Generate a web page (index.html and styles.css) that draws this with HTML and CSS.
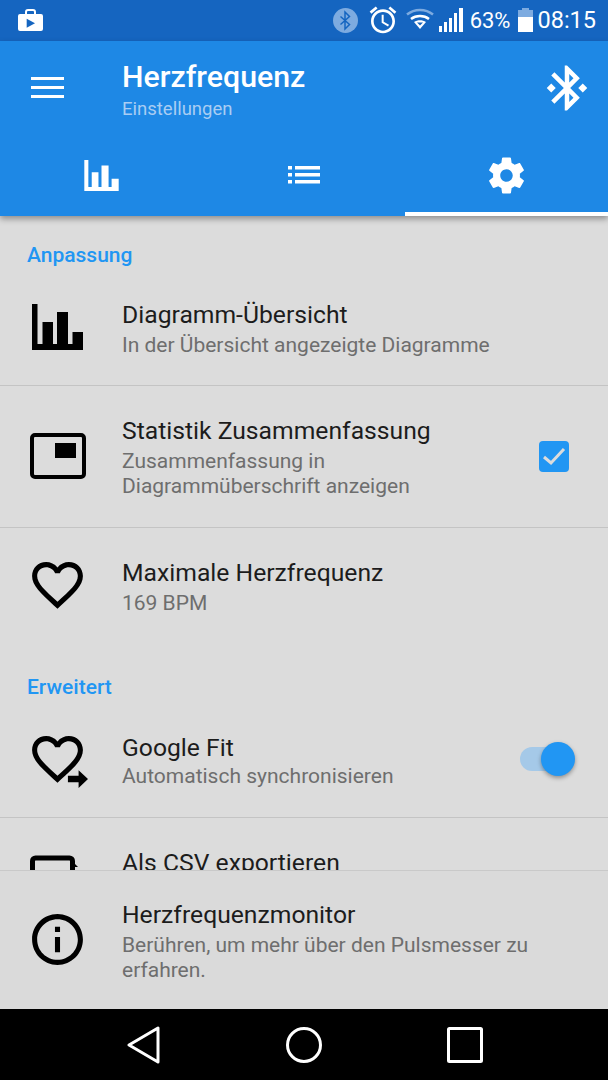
FILE: index.html
```html
<!DOCTYPE html>
<html>
<head>
  <title>Herzfrequenz</title>
  <link rel="stylesheet" href="styles.css">
</head>
<body>
  <div class="screen">
    <div class="status-bar">
      <svg class="store-icon" width="25" height="24" viewBox="0 0 25 24">
        <path fill="#fff" d="M2 6h5V4a3 3 0 0 1 3-3h5a3 3 0 0 1 3 3v2h5a2 2 0 0 1 2 2v13a2 2 0 0 1-2 2H2a2 2 0 0 1-2-2V8a2 2 0 0 1 2-2zm7 0h7V4a1 1 0 0 0-1-1h-5a1 1 0 0 0-1 1z"/>
        <path fill="#1565c0" d="M8.700 10.700l8.300 4.500-8.300 4.500z"/>
      </svg>
      <div class="status-right">
        <svg class="bt-status" width="25" height="25" viewBox="0 0 25 25">
          <circle cx="12.5" cy="12.5" r="12.5" fill="#7dabe0"/>
          <path fill="none" stroke="#1565c0" stroke-width="1.5" d="M7.500 8.500l9 8-4.500 4.500V4l4.500 4.500-9 8"/>
        </svg>
        <svg class="alarm" width="32" height="32" viewBox="0 0 24 24">
          <path fill="#fff" d="M22 5.720l-4.600-3.860-1.290 1.530 4.600 3.860L22 5.720zM7.880 3.390L6.600 1.860 2 5.710l1.290 1.530 4.590-3.850zM12.500 8H11v6l4.750 2.850.75-1.230-4-2.370V8zM12 4c-4.970 0-9 4.030-9 9s4.030 9 9 9 9-4.030 9-9-4.030-9-9-9zm0 16c-3.870 0-7-3.130-7-7s3.130-7 7-7 7 3.130 7 7-3.130 7-7 7z"/>
        </svg>
        <svg class="wifi" width="28" height="22" viewBox="0 0 28 22">
          <path fill="none" stroke="#7dabe0" stroke-width="2.5" d="M1 6.500c7.500-6 18.500-6 26 0"/>
          <path fill="none" stroke="#fff" stroke-width="2.5" d="M5 11c5-4 13-4 18 0"/>
          <path fill="#fff" d="M8 14c3.500-2.500 8.500-2.500 12 0l-6 7z"/>
          <path fill="#1565c0" d="M11 14.500h6l-3 3z"/>
        </svg>
        <svg class="signal" width="24" height="24" viewBox="0 0 24 24">
          <path fill="#fff" d="M0 18h3v6H0zM5 14h3v10H5zM10 10h3v14h-3zM15 5h3v19h-3zM20 0h4v24h-4z"/>
        </svg>
        <span class="battery-text">63%</span>
        <div class="battery">
          <div class="battery-cap"></div>
          <div class="battery-body"><div class="battery-fill"></div></div>
        </div>
        <span class="clock">08:15</span>
      </div>
    </div>

    <div class="app-bar">
      <div class="toolbar">
        <div class="menu-btn"><span></span><span></span><span></span></div>
        <div class="toolbar-title">
          <div class="title">Herzfrequenz</div>
          <div class="subtitle">Einstellungen</div>
        </div>
        <svg class="bt-connect" width="54" height="54" viewBox="0 0 24 24">
          <path fill="#fff" d="M7 12l-2-2-2 2 2 2 2-2zm10.710-4.290L12 2h-1v7.590L6.410 5 5 6.410 10.590 12 5 17.590 6.410 19 11 14.410V22h1l5.710-5.710-4.300-4.290 4.300-4.290zM13 5.830l1.880 1.880L13 9.590V5.830zm1.880 10.460L13 18.170v-3.760l1.880 1.880zM19 10l-2 2 2 2 2-2-2-2z"/>
        </svg>
      </div>
      <div class="tabs">
        <div class="tab">
          <svg width="35" height="31" viewBox="0 0 51 46">
            <path fill="#fff" d="M0 0h6v40h5V18h10v22h4.500V8h10.500v32h4.500V28H51v18H0z"/>
          </svg>
        </div>
        <div class="tab">
          <svg width="32" height="18" viewBox="0 0 32 18">
            <path fill="#fff" d="M0 0h4v3.500H0zM0 7h4v3.500H0zM0 14h4v3.500H0zM7 0h25v3.500H7zM7 7h25v3.500H7zM7 14h25v3.500H7z"/>
          </svg>
        </div>
        <div class="tab tab-active">
          <svg width="43" height="43" viewBox="0 0 24 24">
            <path fill="#fff" d="M19.430 12.980c.04-.32.07-.64.07-.98s-.03-.66-.07-.98l2.110-1.650c.19-.15.24-.42.12-.64l-2-3.460c-.12-.22-.39-.3-.61-.22l-2.490 1c-.52-.4-1.080-.73-1.690-.98l-.38-2.650C14.460 2.180 14.250 2 14 2h-4c-.25 0-.46.18-.49.42l-.38 2.650c-.61.25-1.170.59-1.690.98l-2.490-1c-.23-.09-.49 0-.61.22l-2 3.460c-.13.22-.07.49.12.64l2.110 1.650c-.04.32-.07.65-.07.98s.03.66.07.98l-2.110 1.650c-.19.15-.24.42-.12.64l2 3.460c.12.22.39.3.61.22l2.490-1c.52.4 1.080.73 1.690.98l.38 2.650c.03.24.24.42.49.42h4c.25 0 .46-.18.49-.42l.38-2.650c.61-.25 1.170-.59 1.690-.98l2.490 1c.23.09.49 0 .61-.22l2-3.460c.12-.22.07-.49-.12-.64l-2.110-1.650zM12 15.500c-1.930 0-3.500-1.570-3.500-3.500s1.570-3.500 3.500-3.500 3.500 1.570 3.500 3.500-1.570 3.500-3.500 3.500z"/>
          </svg>
        </div>
      </div>
    </div>

    <div class="settings-list">
      <div class="section-label first">Anpassung</div>

      <div class="row">
        <div class="row-icon">
          <svg class="raise" width="51" height="46" viewBox="0 0 51 46">
            <path fill="#000" d="M0 0h5.500v40h5V18H21v22h4V8h11v32h4.500V28H51v18H0z"/>
          </svg>
        </div>
        <div class="row-text">
          <div class="row-title">Diagramm-Übersicht</div>
          <div class="row-sub">In der Übersicht angezeigte Diagramme</div>
        </div>
      </div>

      <div class="row row-wide">
        <div class="row-icon">
          <svg class="raise" width="56" height="46" viewBox="0 0 56 46">
            <rect x="2" y="2" width="52" height="42" rx="3" fill="none" stroke="#000" stroke-width="4"/>
            <path fill="#000" d="M25 10h21v15H25z"/>
          </svg>
        </div>
        <div class="row-text">
          <div class="row-title">Statistik Zusammenfassung</div>
          <div class="row-sub">Zusammenfassung in<br>Diagrammüberschrift anzeigen</div>
        </div>
        <div class="checkbox">
          <svg width="30" height="31" viewBox="0 0 30 31">
            <path fill="none" stroke="#dcdcdc" stroke-width="3" d="M5 16l7 6L25 8"/>
          </svg>
        </div>
      </div>

      <div class="row no-border">
        <div class="row-icon">
          <svg width="61" height="61" viewBox="0 1 24 24">
            <path fill="#000" d="M16.500 3c-1.740 0-3.410.81-4.500 2.090C10.910 3.810 9.240 3 7.500 3 4.420 3 2 5.420 2 8.500c0 3.780 3.400 6.860 8.550 11.540L12 21.350l1.450-1.320C18.600 15.360 22 12.280 22 8.500 22 5.420 19.580 3 16.500 3zm-4.400 15.550l-.1.1-.1-.1C7.140 14.240 4 11.390 4 8.500 4 6.500 5.500 5 7.500 5c1.540 0 3.040.99 3.570 2.360h1.870C13.460 5.990 14.960 5 16.500 5c2 0 3.500 1.500 3.500 3.500 0 2.890-3.140 5.740-7.900 10.050z"/>
          </svg>
        </div>
        <div class="row-text">
          <div class="row-title">Maximale Herzfrequenz</div>
          <div class="row-sub">169 BPM</div>
        </div>
      </div>

      <div class="section-label">Erweitert</div>

      <div class="row row-fit">
        <div class="row-icon">
          <svg width="61" height="61" viewBox="0 1 24 24">
            <path fill="#000" d="M16.500 3c-1.740 0-3.410.81-4.500 2.090C10.910 3.810 9.240 3 7.500 3 4.420 3 2 5.420 2 8.500c0 3.780 3.400 6.860 8.550 11.540L12 21.350l1.450-1.320C18.600 15.360 22 12.280 22 8.500 22 5.420 19.580 3 16.500 3zm-4.400 15.550l-.1.1-.1-.1C7.140 14.240 4 11.390 4 8.500 4 6.500 5.500 5 7.500 5c1.540 0 3.040.99 3.570 2.360h1.870C13.460 5.990 14.960 5 16.500 5c2 0 3.500 1.500 3.500 3.500 0 2.890-3.140 5.740-7.900 10.050z"/>
            <path fill="#000" stroke="#dcdcdc" stroke-width="1" paint-order="stroke" d="M16.100 18.600h4.200v-2.200l3.700 3.500-3.700 3.500v-2.200h-4.200z"/>
          </svg>
        </div>
        <div class="row-text">
          <div class="row-title">Google Fit</div>
          <div class="row-sub">Automatisch synchronisieren</div>
        </div>
        <div class="switch">
          <div class="switch-track"></div>
          <div class="switch-knob"></div>
        </div>
      </div>

      <div class="row">
        <div class="row-icon">
          <svg width="56" height="46" viewBox="0 0 56 46">
            <path fill="none" stroke="#000" stroke-width="5" d="M2.500 44V7a3 3 0 0 1 3-3h34a3 3 0 0 1 3 3v9M2.500 44h40"/>
            <path fill="#000" d="M45 10l3 3h-3z"/>
          </svg>
        </div>
        <div class="row-text">
          <div class="row-title">Als CSV exportieren</div>
          <div class="row-sub">&nbsp;</div>
        </div>
      </div>
    </div>

    <div class="info-footer">
      <div class="row no-border">
        <div class="row-icon">
          <svg class="raise" width="61" height="61" viewBox="0 0 24 24">
            <path fill="#000" d="M11 17h2v-6h-2v6zm1-15C6.480 2 2 6.480 2 12s4.480 10 10 10 10-4.480 10-10S17.520 2 12 2zm0 18c-4.410 0-8-3.590-8-8s3.590-8 8-8 8 3.590 8 8-3.590 8-8 8zm-1-11h2V7h-2v2z"/>
          </svg>
        </div>
        <div class="row-text">
          <div class="row-title">Herzfrequenzmonitor</div>
          <div class="row-sub">Berühren, um mehr über den Pulsmesser zu<br>erfahren.</div>
        </div>
      </div>
    </div>

    <div class="nav-bar">
      <svg width="33" height="38" viewBox="0 0 33 38">
        <path fill="none" stroke="#fff" stroke-width="3" stroke-linejoin="round" d="M31 2v34L2 19z"/>
      </svg>
      <svg width="36" height="36" viewBox="0 0 36 36">
        <circle cx="18" cy="18" r="16.500" fill="none" stroke="#fff" stroke-width="3"/>
      </svg>
      <svg width="36" height="36" viewBox="0 0 36 36">
        <rect x="1.500" y="1.500" width="33" height="33" rx="1" fill="none" stroke="#fff" stroke-width="3"/>
      </svg>
    </div>
  </div>
</body>
</html>
```

FILE: styles.css
```css
* { box-sizing: border-box; }
body { margin: 0; font-family: Roboto, "Liberation Sans", sans-serif; background: #dcdcdc; }
svg { display: block; }

.screen { width: 608px; height: 1080px; display: flex; flex-direction: column; overflow: hidden; }

/* status bar */
.status-bar { height: 41px; flex: none; background: #1565c0; display: flex; justify-content: space-between; align-items: center; padding: 0 12px 0 18px; color: #fff; }
.store-icon { margin-top: -2px; }
.status-right { display: flex; align-items: center; margin-top: -1px; }
.bt-status { margin-right: 9px; }
.alarm { margin-right: 7px; }
.wifi { margin-right: 5px; margin-top: -2px; }
.signal { margin-right: 7px; }
.battery-text { font-size: 22px; margin-right: 8px; }
.clock { font-size: 23.500px; margin-left: 4px; }
.battery { width: 15px; height: 24px; display: flex; flex-direction: column; align-items: center; }
.battery-cap { width: 7px; height: 2px; background: #7dabe0; }
.battery-body { flex: 1; width: 100%; background: #7dabe0; display: flex; align-items: flex-end; }
.battery-fill { width: 100%; height: 70%; background: #fff; }

/* app bar */
.app-bar { height: 175px; flex: none; background: #1e88e5; color: #fff; position: relative; z-index: 2; box-shadow: 0 3px 6px rgba(0,0,0,0.35); display: flex; flex-direction: column; }
.toolbar { height: 93px; flex: none; display: flex; align-items: center; }
.menu-btn { width: 122px; padding-left: 31px; display: flex; flex-direction: column; gap: 6px; }
.menu-btn span { display: block; width: 33px; height: 3px; background: #fff; }
.toolbar-title { flex: 1; margin-top: 5px; }
.title { font-size: 30.300px; font-weight: 500; line-height: 38px; }
.subtitle { font-size: 18.500px; line-height: 26px; color: #a9cdf3; }
.bt-connect { margin-right: 14px; }
.tabs { flex: 1; display: flex; }
.tab { flex: 1; display: flex; align-items: center; justify-content: center; }
.tab-active { border-bottom: 4px solid #fff; padding-top: 5px; }

/* settings rows */
.settings-list { height: 654px; flex: none; overflow: hidden; }
.section-label { color: #2196f3; font-size: 21px; font-weight: 500; padding-left: 27px; line-height: 24px; padding-top: 32px; }
.section-label.first { padding-top: 27px; height: 54px; }
.row { display: flex; align-items: center; padding: 30px 0 27px; border-bottom: 1px solid #c4c4c4; }
.row.no-border { border-bottom: none; }
.row-wide { padding: 30px 0 28px; }
.row-fit { padding: 34px 0 28px; }
.row-fit .row-sub { margin-top: 1px; }
.row-icon { width: 115px; margin-right: 7px; flex: none; display: flex; justify-content: center; height: 46px; align-items: center; }
.row-icon .raise { margin-bottom: 4px; }
.row-text { flex: 1; }
.row-title { font-size: 24.700px; line-height: 30px; color: #1c1c1c; }
.row-sub { font-size: 21px; line-height: 25px; margin-top: 3px; color: #6e6e6e; }

.checkbox { width: 30px; height: 31px; margin-right: 39px; margin-top: -2px; background: #2196f3; border-radius: 4px; }

.switch { width: 55px; height: 34px; margin-right: 33px; margin-top: -4px; position: relative; }
.switch-track { position: absolute; left: 0; right: 10px; top: 5px; height: 24px; border-radius: 12px; background: #a5c9e8; }
.switch-knob { position: absolute; right: 0; top: 0; width: 34px; height: 34px; border-radius: 50%; background: #2196f3; box-shadow: 0 2px 4px rgba(0,0,0,0.35); }

/* pinned info row */
.info-footer { flex: none; height: 139px; background: #dadada; border-top: 1px solid #c9c9c9; }
.info-footer .row { padding: 29px 0 26px; }

/* system nav */
.nav-bar { flex: 1; background: #000; display: flex; justify-content: space-between; align-items: center; padding: 0 125px 0 127px; }
```
